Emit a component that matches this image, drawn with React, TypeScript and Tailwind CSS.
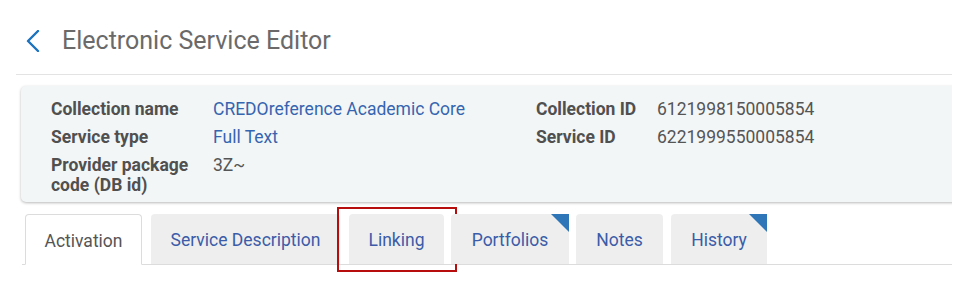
// Electronic Service Editor header with summary panel and tab strip.

const leftRows = [
  { label: "Collection name", value: "CREDOreference Academic Core", link: true },
  { label: "Service type", value: "Full Text", link: true },
  { label: "Provider package code (DB id)", value: "3Z~", link: false },
];

const rightRows = [
  { label: "Collection ID", value: "6121998150005854" },
  { label: "Service ID", value: "6221999550005854" },
];

const tabs = [
  { label: "Activation", cls: "w-[117px]", active: true },
  { label: "Service Description", cls: "ml-[9px] w-[189px]" },
  { label: "Linking", cls: "ml-[9px] w-[95px]", boxed: true },
  { label: "Portfolios", cls: "ml-[7px] w-[118px]", flag: true },
  { label: "Notes", cls: "ml-[7px] w-[87px]" },
  { label: "History", cls: "ml-[8px] w-[96px]", flag: true },
];

export default function App() {
  return (
    <div className="h-[286px] w-[978px] overflow-hidden bg-white font-['Roboto',sans-serif]">
      <div className="ml-4 w-[936px] overflow-x-clip pb-4">
        {/* header */}
        <div className="flex h-[75px] items-center border-b border-[#e3e3e3] pl-[10px] pt-[7px]">
          <svg width="14" height="22" viewBox="0 0 14 22">
            <polyline
              points="12,1 2,11 12,21"
              fill="none"
              stroke="#1b72bf"
              strokeWidth="2.4"
              strokeLinecap="round"
              strokeLinejoin="round"
            />
          </svg>
          <h1 className="ml-[22px] text-[25px] leading-none text-[#6a6a6a]">Electronic Service Editor</h1>
        </div>

        {/* summary panel */}
        <div className="pl-[5px] pt-[11px]">
          <div className="flex h-[116px] w-[960px] rounded-[5px] bg-[#f3f6f7] pl-[30px] pt-[9px] shadow-[0_1px_3px_rgba(0,0,0,0.28)]">
            <div className="w-[485px]">
              {leftRows.map((r) => (
                <div key={r.label} className="flex py-[4px] text-[17.5px] leading-[20px]">
                  <div className="w-[162px] pr-2 font-bold text-[#505050]">{r.label}</div>
                  <div className={r.link ? "text-[#3665b0]" : "text-[#555]"}>{r.value}</div>
                </div>
              ))}
            </div>
            <div>
              {rightRows.map((r) => (
                <div key={r.label} className="flex py-[4px] text-[17.5px] leading-[20px]">
                  <div className="w-[121px] font-bold text-[#505050]">{r.label}</div>
                  <div className="text-[#555]">{r.value}</div>
                </div>
              ))}
            </div>
          </div>
        </div>

        {/* tabs */}
        <div className="ml-[6px] mt-[12px] flex border-b border-[#dcdcdc] pl-[3px]">
          {tabs.map((t) => (
            <div
              key={t.label}
              className={
                t.active
                  ? `relative -mb-px flex h-[51px] ${t.cls} items-center justify-center rounded-t-[4px] border border-b-white border-[#dcdcdc] bg-white pt-[3px] text-[17.5px] text-[#555]`
                  : `relative flex h-[50px] ${t.cls} items-center justify-center rounded-t-[4px] bg-[#eeeeee] pt-[3px] text-[17.5px] text-[#3b5ca8]`
              }
            >
              {t.label}
              {t.flag && (
                <span className="absolute right-0 top-0 h-[18px] w-[18px] bg-[#2f76b8] [clip-path:polygon(0_0,100%_0,100%_100%)]" />
              )}
              {t.boxed && (
                <span className="pointer-events-none absolute bottom-[-8px] left-[-12px] right-[-13px] top-[-7px] border-2 border-[#b80d0d]" />
              )}
            </div>
          ))}
        </div>
      </div>
    </div>
  );
}
